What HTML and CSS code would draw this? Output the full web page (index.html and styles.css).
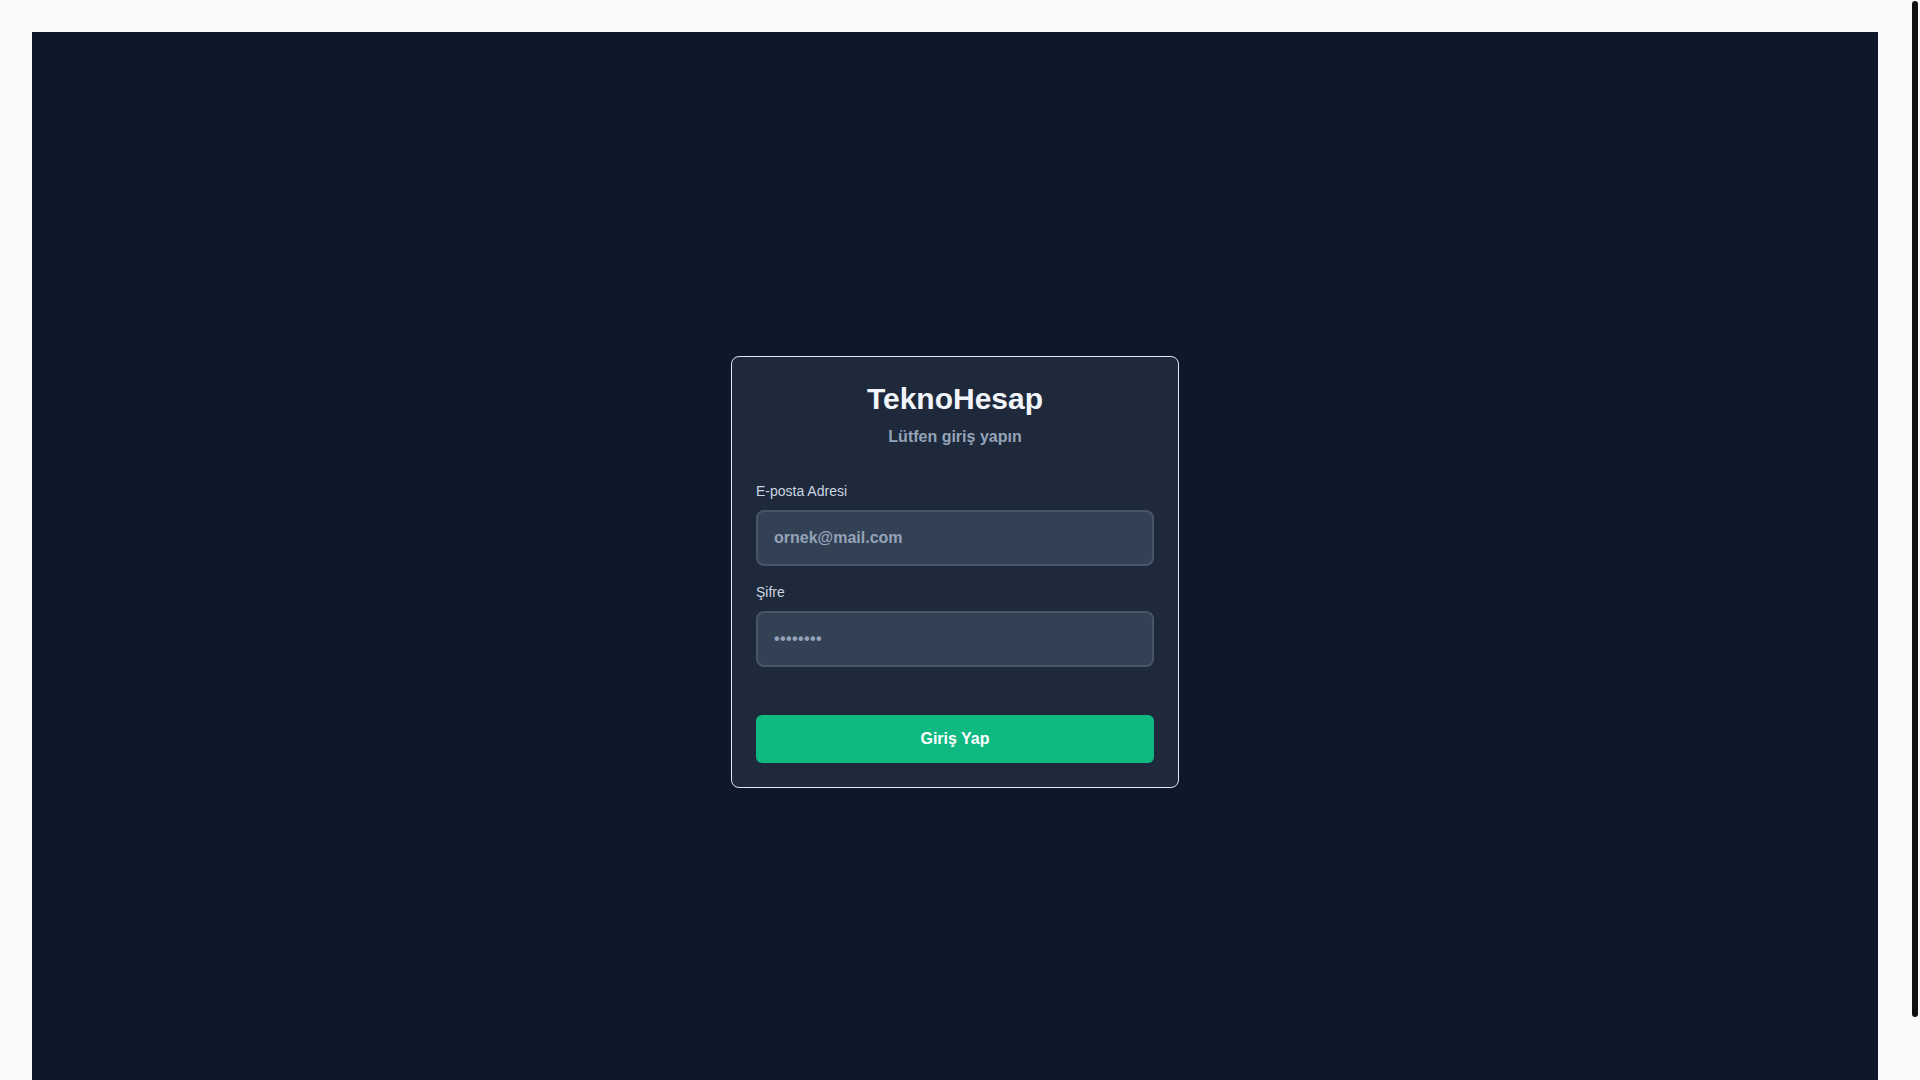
FILE: index.html
```html
<!DOCTYPE html>
<html lang="tr">
<head>
<meta charset="utf-8">
<title>TeknoHesap - Giriş</title>
<link rel="stylesheet" href="styles.css">
</head>
<body>
<main class="stage">
  <form class="card">
    <header class="card-head">
      <h1 class="brand">TeknoHesap</h1>
      <p class="subtitle">Lütfen giriş yapın</p>
    </header>
    <div class="field">
      <label class="label" for="email">E-posta Adresi</label>
      <input class="input" id="email" type="email" placeholder="ornek@mail.com">
    </div>
    <div class="field">
      <label class="label" for="pw">Şifre</label>
      <input class="input input-pw" id="pw" type="password" placeholder="••••••••">
    </div>
    <button class="btn" type="button">Giriş Yap</button>
  </form>
</main>
<div class="scrollbar" aria-hidden="true"><div class="scroll-thumb"></div></div>
</body>
</html>
```
FILE: styles.css
```css
html {
  background: #f8fafc;
}
* {
  box-sizing: border-box;
}
body {
  margin: 0 10px 0 0;
  padding: 32px;
  background: #f8fafc;
  font-family: "Liberation Sans", Arial, sans-serif;
  line-height: 1.5;
}
.scrollbar {
  position: fixed;
  top: 0;
  right: 0;
  width: 10px;
  height: 100vh;
  background: #f8fafc;
}
.scroll-thumb {
  position: absolute;
  top: 1px;
  left: 2px;
  width: 6px;
  height: 1016px;
  background: #111111;
  border-radius: 3px;
}
.stage {
  min-height: 100vh;
  background: #0f172a;
  display: flex;
  align-items: center;
  justify-content: center;
}
.card {
  width: 448px;
  background: #1e293b;
  border: 1px solid #e2e8f0;
  border-radius: 8px;
  padding: 24px;
  display: flex;
  flex-direction: column;
}
.card-head {
  text-align: center;
  margin-bottom: 32px;
}
.brand {
  margin: 0;
  font-size: 30px;
  line-height: 36px;
  font-weight: 700;
  color: #f1f5f9;
}
.subtitle {
  margin: 8px 0 0;
  font-size: 16px;
  line-height: 24px;
  font-weight: 700;
  color: #94a3b8;
}
.field {
  display: flex;
  flex-direction: column;
  margin-bottom: 16px;
}
.label {
  font-size: 14px;
  line-height: 21px;
  color: #cbd5e1;
  margin-bottom: 8px;
}
.input {
  width: 100%;
  height: 56px;
  padding: 14px 16px;
  border: 2px solid #475569;
  border-radius: 8px;
  background: #334155;
  color: #f1f5f9;
  font-family: "Liberation Sans", Arial, sans-serif;
  font-size: 16px;
  line-height: 24px;
  font-weight: 700;
  outline: none;
}
.input::placeholder {
  color: #94a3b8;
  opacity: 1;
}
.input-pw::placeholder {
  letter-spacing: 0.4px;
}
.btn {
  margin-top: 32px;
  height: 48px;
  width: 100%;
  border: none;
  border-radius: 6px;
  background: #10b981;
  color: #ffffff;
  font-family: "Liberation Sans", Arial, sans-serif;
  font-size: 16px;
  line-height: 24px;
  font-weight: 700;
  cursor: pointer;
}
```
